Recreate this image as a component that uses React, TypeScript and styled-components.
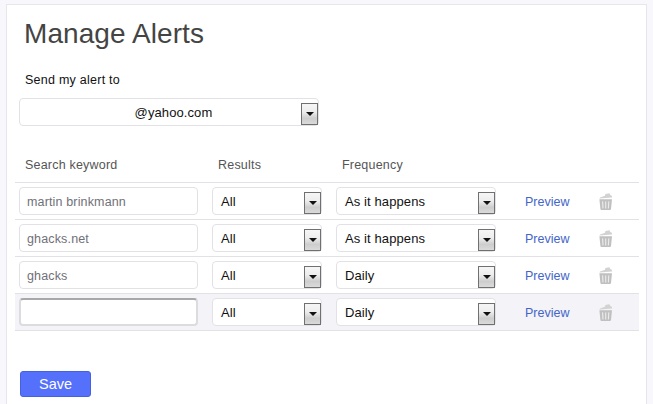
import React from "react";
import styled, { createGlobalStyle } from "styled-components";

const GlobalStyle = createGlobalStyle`
  html, body {
    margin: 0;
    height: 100%;
    overflow: hidden;
    background: #f8f8fc;
    font-family: "Liberation Sans", Arial, sans-serif;
  }
`;

const Card = styled.main`
  box-sizing: border-box;
  height: 400px;
  margin: 4px 6px 0 6px;
  padding: 0 7px 0 8px;
  background: #fff;
  border: 1px solid #e6e6ec;
  border-bottom: 0;
`;

const Title = styled.h1`
  margin: 0;
  padding: 12px 0 0 9px;
  font-size: 28px;
  line-height: 34px;
  letter-spacing: 0.08px;
  font-weight: 400;
  color: #444;
`;

const Label = styled.div`
  padding: 22px 0 0 10px;
  font-size: 12.5px;
  line-height: 15px;
  letter-spacing: 0.25px;
  color: #111;
`;

const SelectBox = styled.div<{ $width: number; $center?: boolean }>`
  box-sizing: border-box;
  display: flex;
  align-items: center;
  justify-content: ${(p) => (p.$center ? "center" : "flex-start")};
  position: relative;
  width: ${(p) => p.$width}px;
  height: 28px;
  padding: 0 ${(p) => (p.$center ? "0" : "20px")} 0 ${(p) => (p.$center ? "9px" : "8px")};
  background: #fff;
  border: 1px solid #e2e2e6;
  border-radius: 4px;
  font-size: 13px;
  letter-spacing: 0.1px;
  color: #111;
`;

const ArrowButton = styled.span`
  box-sizing: border-box;
  position: absolute;
  top: 4px;
  right: 0;
  width: 17px;
  height: 22px;
  border: 1px solid #707070;
  background: linear-gradient(#f6f6f6, #ededed 40%, #cdcdcd 72%, #dadada);
  display: flex;
  align-items: center;
  justify-content: center;

  &::after {
    content: "";
    border-style: solid;
    border-width: 4px 4.5px 0 4.5px;
    border-color: #111 transparent transparent transparent;
  }
`;

const MainSelect = styled.div`
  padding: 10px 0 0 4px;
`;

const RowGrid = styled.div`
  display: grid;
  grid-template-columns: 193px 124px 189px 73px 1fr;
  align-items: center;
  padding-left: 4px;
`;

const HeaderRow = styled(RowGrid)`
  height: 57px;
  box-sizing: border-box;
  padding-top: 21px;
  border-bottom: 1px solid #e2e2e6;
`;

const HeaderCell = styled.div`
  padding-left: 6px;
  font-size: 12.5px;
  letter-spacing: 0.2px;
  color: #555;
`;

const AlertRow = styled(RowGrid)<{ $active?: boolean }>`
  height: 37px;
  box-sizing: border-box;
  border-bottom: 1px solid #e2e2e6;
  background: ${(p) => (p.$active ? "#f3f3f8" : "#fff")};
`;

const KeywordInput = styled.div<{ $focused?: boolean }>`
  box-sizing: border-box;
  width: 179px;
  height: 28px;
  padding: 1px 7px 0;
  display: flex;
  align-items: center;
  background: #fff;
  border: ${(p) => (p.$focused ? "2px solid #dcdcdf" : "1px solid #e2e2e6")};
  border-top-color: ${(p) => (p.$focused ? "#a8a8a8" : "#e2e2e6")};
  border-radius: 4px;
  font-size: 12.5px;
  letter-spacing: 0.15px;
  color: #707078;
`;

const PreviewLink = styled.a`
  padding-top: 1px;
  font-size: 12.5px;
  color: #4465c8;
  cursor: pointer;
`;

const TrashIcon = styled.svg`
  display: block;
  width: 15px;
  height: 17px;
`;

const Footer = styled.div`
  padding: 40px 0 0 5px;
`;

const SaveButton = styled.button`
  box-sizing: border-box;
  width: 71px;
  height: 26px;
  padding: 0;
  background: #5570fb;
  border: 1px solid #4560e0;
  border-radius: 3px;
  font-family: inherit;
  font-size: 14.5px;
  color: #fff;
`;

const Trash = () => (
  <TrashIcon viewBox="0 0 15 17">
    <path d="M1.5 5.4 L2 4.4 L7 2.8 L7.4 1 L11.6 0.2 L12 1.8 L14 3 L14 4.6 Z" fill="#d2d2d2" />
    <path d="M1.4 6.2 H14 L13 16 Q12.9 17 12 17 H3.4 Q2.5 17 2.4 16 Z" fill="#c0c0c0" />
    <path d="M4.6 8.4 L5 15.4 M7.7 8.4 V15.4 M10.8 8.4 L10.4 15.4" stroke="#ececec" strokeWidth="1.1" />
  </TrashIcon>
);

const Select = ({ value, width }: { value: string; width: number }) => (
  <SelectBox $width={width}>
    {value}
    <ArrowButton />
  </SelectBox>
);

const alerts = [
  { keyword: "martin brinkmann", frequency: "As it happens" },
  { keyword: "ghacks.net", frequency: "As it happens" },
  { keyword: "ghacks", frequency: "Daily" },
  { keyword: "", frequency: "Daily", active: true },
];

export default function App() {
  return (
    <>
      <GlobalStyle />
      <Card>
        <Title>Manage Alerts</Title>
        <Label>Send my alert to</Label>
        <MainSelect>
          <SelectBox $width={300} $center>
            @yahoo.com
            <ArrowButton />
          </SelectBox>
        </MainSelect>
        <HeaderRow>
          <HeaderCell>Search keyword</HeaderCell>
          <HeaderCell>Results</HeaderCell>
          <HeaderCell>Frequency</HeaderCell>
        </HeaderRow>
        {alerts.map((alert, i) => (
          <AlertRow key={i} $active={alert.active}>
            <KeywordInput $focused={alert.active}>{alert.keyword}</KeywordInput>
            <Select value="All" width={110} />
            <Select value={alert.frequency} width={160} />
            <PreviewLink>Preview</PreviewLink>
            <Trash />
          </AlertRow>
        ))}
        <Footer>
          <SaveButton>Save</SaveButton>
        </Footer>
      </Card>
    </>
  );
}
